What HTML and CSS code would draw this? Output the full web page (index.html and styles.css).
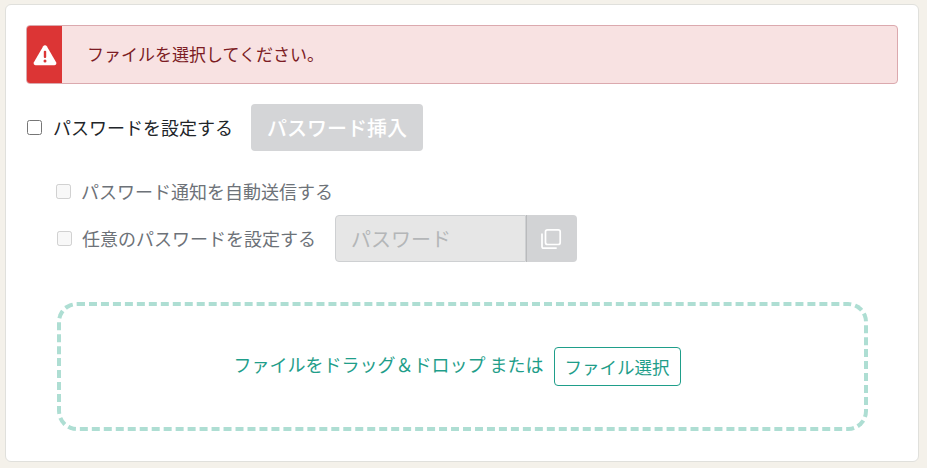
FILE: index.html
```html
<!DOCTYPE html>
<html lang="ja">
<head>
<meta charset="utf-8">
<title>ファイル選択</title>
<link rel="stylesheet" href="styles.css">
</head>
<body>
<main class="card">
  <div class="alert">
    <div class="alert-icon">
      <svg width="24" height="22" viewBox="0 0 24 22"><path d="M12 1.200c-.8 0-1.400.4-1.800 1L.9 18.200c-.8 1.400.2 3 1.800 3h18.600c1.600 0 2.600-1.600 1.800-3L13.800 2.200c-.4-.6-1-1-1.800-1z" fill="#fff"/><rect x="10.800" y="6.800" width="2.400" height="7.200" rx="1" fill="#dc3535"/><circle cx="12" cy="17" r="1.500" fill="#dc3535"/></svg>
    </div>
    <p class="alert-text">ファイルを選択してください。</p>
  </div>
  <div class="main-row">
    <label class="check-label"><input type="checkbox" class="check"><span class="label-text">パスワードを設定する</span></label>
    <button class="insert-btn" type="button" disabled>パスワード挿入</button>
  </div>
  <div class="options">
    <label class="check-label muted notify"><input type="checkbox" class="check" disabled><span>パスワード通知を自動送信する</span></label>
    <div class="option-row">
      <label class="check-label muted custom"><input type="checkbox" class="check" disabled><span class="label-text">任意のパスワードを設定する</span></label>
      <div class="input-group">
        <input class="pw-input" type="text" placeholder="パスワード" disabled>
        <button class="copy-btn" type="button" disabled aria-label="コピー">
          <svg width="22" height="22" viewBox="0 0 22 22" fill="none" stroke="#fff" stroke-width="1.700"><rect x="5.500" y="1.800" width="14.700" height="14.700" rx="2"/><path d="M2 5.500v13c0 1 .7 1.700 1.700 1.700h13"/></svg>
        </button>
      </div>
    </div>
  </div>
  <div class="drop">
    <span class="drop-text">ファイルをドラッグ＆ドロップ または</span>
    <button class="file-btn" type="button">ファイル選択</button>
  </div>
</main>
</body>
</html>
```
FILE: styles.css
```css
* { box-sizing: border-box; }
html, body { height: 100%; }
body {
  margin: 0;
  padding: 4px 8px 6px 5px;
  background: #f4f1ea;
  font-family: "Noto Sans CJK JP", "Noto Sans", sans-serif;
  font-size: 16px;
  color: #212529;
  overflow: hidden;
}
.card {
  height: 458px;
  padding: 20px 20px 0 20px;
  background: #fff;
  border: 1px solid #e0e0dc;
  border-radius: 6px;
}
.alert {
  display: flex;
  height: 59px;
  background: #f8e2e2;
  border: 1px solid #dba9ae;
  border-radius: 4px;
  overflow: hidden;
}
.alert-icon {
  display: flex;
  width: 35px;
  align-items: center;
  justify-content: center;
  background: #dc3535;
}
.alert-text {
  margin: 0 0 2px;
  padding-left: 25px;
  align-self: center;
  font-size: 17px;
  color: #7c1c24;
}
.main-row {
  display: flex;
  align-items: center;
  margin-top: 20px;
}
.check-label {
  display: inline-flex;
  align-items: center;
  font-size: 18px;
  white-space: nowrap;
}
.label-text { padding-bottom: 2px; }
.check {
  width: 15px;
  height: 15px;
  margin: 0 11px 0 1px;
  flex: none;
}
.insert-btn {
  height: 47px;
  margin-left: 18px;
  padding: 0 16px;
  background: #d4d5d7;
  border: 0;
  border-radius: 4px;
  color: #fff;
  font: 500 20px "Noto Sans CJK JP", sans-serif;
}
.options {
  padding-left: 29px;
  margin-top: 18px;
}
.muted { color: #6d7278; }
.notify { height: 46px; padding-bottom: 2px; }
.muted .check { margin-right: 10px; }
.custom .check { margin-left: 2px; }
.option-row {
  display: flex;
  align-items: center;
}
.input-group {
  display: flex;
  height: 47px;
  margin-left: 19px;
}
.pw-input {
  width: 191px;
  padding: 0 15px;
  background: #e6e6e6;
  border: 1px solid #ced0d2;
  border-radius: 4px 0 0 4px;
  font: 20px "Noto Sans CJK JP", sans-serif;
}
.pw-input::placeholder { color: #b4b6b8; opacity: 1; }
.copy-btn {
  display: flex;
  width: 51px;
  align-items: center;
  justify-content: center;
  padding: 0 2px 0 0;
  background: #d2d3d5;
  border: 0;
  border-left: 1px solid #b9babc;
  border-radius: 0 4px 4px 0;
}
.drop {
  display: flex;
  height: 129px;
  margin: 40px 30px 0 31px;
  padding-right: 11px;
  align-items: center;
  justify-content: center;
  gap: 10px;
  border: 4px dashed #aeded3;
  border-radius: 20px;
}
.drop-text {
  color: #1f9e8a;
  font-size: 18px;
  padding-bottom: 5px;
}
.file-btn {
  width: 127px;
  height: 39px;
  padding: 0;
  background: #fff;
  border: 1px solid #1f9e8a;
  border-radius: 4px;
  color: #1f9e8a;
  font: 17.500px "Noto Sans CJK JP", sans-serif;
}
```
